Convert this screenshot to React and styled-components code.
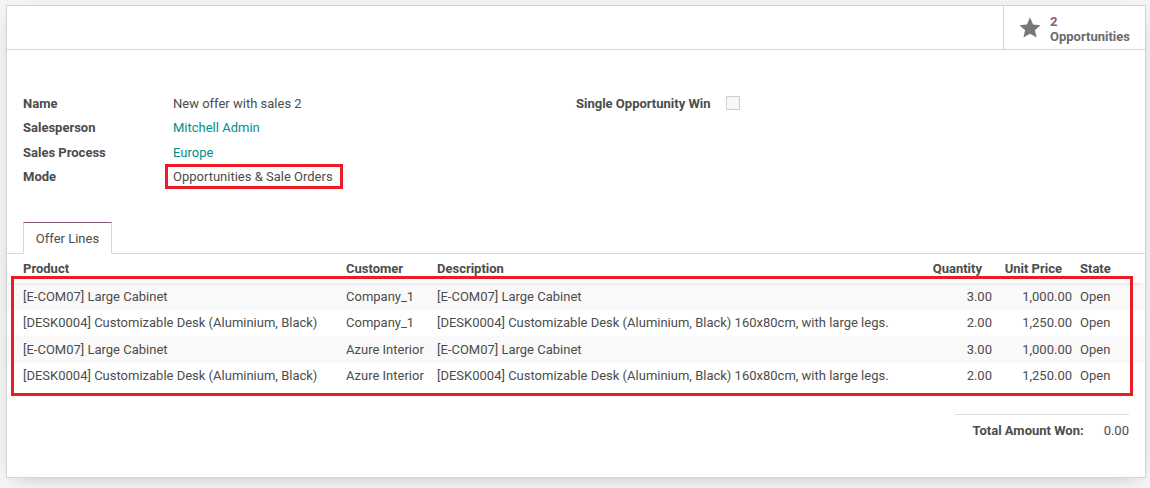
import React from "react";
import styled, { createGlobalStyle } from "styled-components";

const Global = createGlobalStyle`
  html, body { margin: 0; padding: 0; background: #f5f5f5; }
  body { font-family: Roboto, "Noto Sans", sans-serif; font-size: 13px; color: #4c4c4c; }
  * { box-sizing: border-box; }
`;

const Page = styled.div`
  width: 1150px;
  height: 488px;
  padding: 5px 0 0 6px;
  overflow: hidden;
`;

const Sheet = styled.div`
  width: 1140px;
  height: 473px;
  background: #fff;
  border: 1px solid #d4d4d4;
  box-shadow: 0 5px 20px -10px rgba(0, 0, 0, 0.35);
  display: flex;
  flex-direction: column;
`;

const ButtonBox = styled.div`
  height: 44px;
  border-bottom: 1px solid #d4d4d4;
  display: flex;
  justify-content: flex-end;
`;

const StatButton = styled.div`
  width: 142px;
  border-left: 1px solid #d4d4d4;
  display: flex;
  align-items: center;
  padding-left: 14px;
  gap: 8px;
`;

const StatText = styled.div`
  display: flex;
  flex-direction: column;
  line-height: 15px;
  font-weight: 700;
  font-size: 13px;
  padding-top: 2px;
`;

const StatValue = styled.span`
  color: #875a7b;
`;

const StatLabel = styled.span`
  color: #6b6b6b;
`;

const FormBody = styled.div`
  padding: 41px 16px 0 16px;
  display: flex;
`;

const Group = styled.div`
  width: ${(p) => p.$width}px;
  display: flex;
  flex-direction: column;
`;

const FieldRow = styled.div`
  height: 24.5px;
  display: flex;
  align-items: center;
`;

const Label = styled.div`
  width: ${(p) => p.$width}px;
  font-weight: 700;
  color: #4c4c4c;
`;

const Value = styled.div`
  color: ${(p) => (p.$link ? "#008f8c" : "#4c4c4c")};
`;

const Highlight = styled.span`
  position: relative;
  &::after {
    content: "";
    position: absolute;
    left: -8px;
    right: -10px;
    top: -5px;
    bottom: -5px;
    border: 3px solid #ec1c24;
  }
`;

const Checkbox = styled.span`
  display: inline-block;
  width: 14px;
  height: 14px;
  border: 1px solid #cfcfcf;
  background: #f8f8f8;
`;

const Notebook = styled.div`
  margin-top: 33px;
  display: flex;
  flex-direction: column;
`;

const TabBar = styled.div`
  display: flex;
  padding-left: 16px;
  border-bottom: 1px solid #d8d8d8;
  height: 32px;
`;

const Tab = styled.div`
  width: 89px;
  height: 32px;
  border: 1px solid #d8d8d8;
  border-top-color: #875a7b;
  border-bottom-color: #fff;
  background: #fff;
  margin-bottom: -1px;
  display: flex;
  align-items: center;
  justify-content: center;
  color: #4c4c4c;
`;

const ListWrap = styled.div`
  position: relative;
`;

const Row = styled.div`
  display: grid;
  grid-template-columns: 323px 91px 493px 70px 80px 49px;
  padding: 0 16px;
  height: ${(p) => (p.$head ? 29 : 26.5)}px;
  align-items: center;
  background: ${(p) => (p.$striped ? "#f9f9f9" : "#fff")};
  font-weight: ${(p) => (p.$head ? 700 : 400)};
  ${(p) => (p.$head ? "box-shadow: 0 3px 5px -3px rgba(0,0,0,0.12); position: relative; z-index: 1;" : "")}
`;

const Cell = styled.div`
  white-space: nowrap;
  overflow: hidden;
  text-align: ${(p) => (p.$num ? "right" : "left")};
  padding-right: ${(p) => (p.$num ? (p.$head ? 18 : 8) : 0)}px;
`;

const TableBox = styled.div`
  position: absolute;
  left: 4px;
  top: 22px;
  width: 1122px;
  height: 120px;
  border: 3px solid #ec1c24;
  pointer-events: none;
  z-index: 2;
`;

const TotalWrap = styled.div`
  display: flex;
  justify-content: flex-end;
  padding: 25px 16px 0 0;
`;

const Total = styled.div`
  width: 174px;
  border-top: 1px solid #dcdcdc;
  display: flex;
  justify-content: flex-end;
  padding-top: 8px;
  line-height: 16px;
`;

const TotalLabel = styled.span`
  font-weight: 700;
  margin-right: 20px;
`;

const Star = () => (
  <svg width="24" height="24" viewBox="0 0 24 24">
    <path
      d="M12 1.6l3.1 6.9 7.4.7-5.6 5 1.7 7.4L12 17.8l-6.6 3.8 1.7-7.4-5.6-5 7.4-.7z"
      fill="#777"
    />
  </svg>
);

const lines = [
  ["[E-COM07] Large Cabinet", "Company_1", "[E-COM07] Large Cabinet", "3.00", "1,000.00", "Open"],
  ["[DESK0004] Customizable Desk (Aluminium, Black)", "Company_1", "[DESK0004] Customizable Desk (Aluminium, Black) 160x80cm, with large legs.", "2.00", "1,250.00", "Open"],
  ["[E-COM07] Large Cabinet", "Azure Interior", "[E-COM07] Large Cabinet", "3.00", "1,000.00", "Open"],
  ["[DESK0004] Customizable Desk (Aluminium, Black)", "Azure Interior", "[DESK0004] Customizable Desk (Aluminium, Black) 160x80cm, with large legs.", "2.00", "1,250.00", "Open"],
];

export default function App() {
  return (
    <>
      <Global />
      <Page>
        <Sheet>
          <ButtonBox>
            <StatButton>
              <Star />
              <StatText>
                <StatValue>2</StatValue>
                <StatLabel>Opportunities</StatLabel>
              </StatText>
            </StatButton>
          </ButtonBox>
          <FormBody>
            <Group $width={553}>
              <FieldRow>
                <Label $width={150}>Name</Label>
                <Value>New offer with sales 2</Value>
              </FieldRow>
              <FieldRow>
                <Label $width={150}>Salesperson</Label>
                <Value $link>Mitchell Admin</Value>
              </FieldRow>
              <FieldRow>
                <Label $width={150}>Sales Process</Label>
                <Value $link>Europe</Value>
              </FieldRow>
              <FieldRow>
                <Label $width={150}>Mode</Label>
                <Value>
                  <Highlight>Opportunities &amp; Sale Orders</Highlight>
                </Value>
              </FieldRow>
            </Group>
            <Group $width={553}>
              <FieldRow>
                <Label $width={150}>Single Opportunity Win</Label>
                <Checkbox />
              </FieldRow>
            </Group>
          </FormBody>
          <Notebook>
            <TabBar>
              <Tab>Offer Lines</Tab>
            </TabBar>
            <ListWrap>
              <Row $head>
                <Cell>Product</Cell>
                <Cell>Customer</Cell>
                <Cell>Description</Cell>
                <Cell $num $head>Quantity</Cell>
                <Cell $num $head>Unit Price</Cell>
                <Cell>State</Cell>
              </Row>
              {lines.map((l, i) => (
                <Row key={i} $striped={i % 2 === 0}>
                  <Cell>{l[0]}</Cell>
                  <Cell>{l[1]}</Cell>
                  <Cell>{l[2]}</Cell>
                  <Cell $num>{l[3]}</Cell>
                  <Cell $num>{l[4]}</Cell>
                  <Cell>{l[5]}</Cell>
                </Row>
              ))}
              <TableBox />
            </ListWrap>
            <TotalWrap>
              <Total>
                <TotalLabel>Total Amount Won:</TotalLabel>
                <span>0.00</span>
              </Total>
            </TotalWrap>
          </Notebook>
        </Sheet>
      </Page>
    </>
  );
}
